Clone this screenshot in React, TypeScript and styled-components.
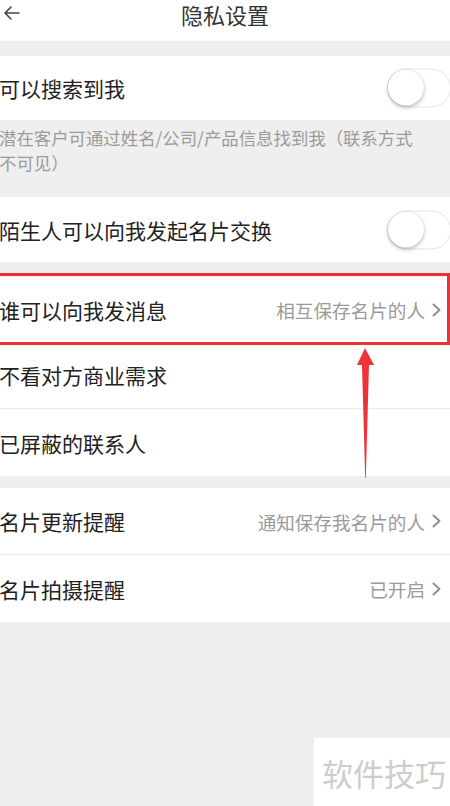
import React from "react";
import styled, { createGlobalStyle } from "styled-components";

const Global = createGlobalStyle`
  html, body { margin: 0; padding: 0; background: #efefef; }
  body { font-family: "Noto Sans CJK SC", "Noto Sans", sans-serif; }
  * { box-sizing: border-box; }
`;

const Page = styled.div`
  position: relative;
  width: 450px;
  height: 806px;
  overflow: hidden;
  background: #efefef;
  display: flex;
  flex-direction: column;
`;

const Header = styled.div`
  height: 41px;
  background: #fff;
  display: flex;
  align-items: flex-start;
  justify-content: center;
  position: relative;
  padding-top: 2px;
`;

const BackButton = styled.div`
  position: absolute;
  left: 3px;
  top: 4px;
  width: 18px;
  height: 18px;
  display: flex;
`;

const Title = styled.div`
  font-size: 22px;
  line-height: 24px;
  color: #333;
`;

const Spacer = styled.div<{ $h: number }>`
  height: ${(p) => p.$h}px;
  flex: none;
`;

const Group = styled.div`
  background: #fff;
  display: flex;
  flex-direction: column;
`;

const Row = styled.div<{ $h: number; $divider?: boolean }>`
  position: relative;
  height: ${(p) => p.$h}px;
  display: flex;
  align-items: center;
  padding: 0 8px 0 0;
  border-bottom: ${(p) => (p.$divider ? "1px solid #ececec" : "none")};
  flex: none;
`;

const Label = styled.div`
  flex: 1;
  font-size: 21px;
  color: #222;
  white-space: nowrap;
  margin-left: -1px;
`;

const Value = styled.div`
  font-size: 18.6px;
  color: #9a9a9a;
  white-space: nowrap;
  margin-right: 6px;
`;

const Note = styled.div`
  height: 77px;
  padding: 5px 30px 0 0;
  font-size: 17.4px;
  line-height: 25px;
  color: #9b9b9b;
  margin-left: -1px;
`;

const Track = styled.div`
  position: absolute;
  left: 387px;
  top: 50%;
  transform: translateY(-50%);
  width: 64px;
  height: 39px;
  border-radius: 20px;
  border: 1.5px solid #e3e3e3;
  background: #fff;
`;

const Knob = styled.div`
  position: absolute;
  left: 0px;
  top: 0px;
  width: 36px;
  height: 36px;
  border-radius: 50%;
  background: #fff;
  box-shadow: 0 2px 4px rgba(0, 0, 0, 0.25), 0 0 1px rgba(0, 0, 0, 0.2);
`;

const Highlight = styled.div`
  position: absolute;
  left: -3px;
  right: 0px;
  top: -4px;
  bottom: -3px;
  border: 3px solid #e8323a;
  border-left: none;
  pointer-events: none;
`;

const ArrowLayer = styled.svg`
  position: absolute;
  left: 355px;
  top: 346px;
  pointer-events: none;
`;

const Watermark = styled.div`
  position: absolute;
  right: 0;
  bottom: 0;
  width: 136px;
  height: 68px;
  background: #fff;
  display: flex;
  align-items: center;
  justify-content: center;
  font-size: 31px;
  color: #cdcdcd;
  padding-left: 4px;
`;

const Chevron = () => (
  <svg width="11" height="14" viewBox="0 0 11 14">
    <path d="M2.5 1.5 L8.5 7 L2.5 12.5" fill="none" stroke="#8f8f8f" strokeWidth="2" strokeLinecap="round" strokeLinejoin="round" />
  </svg>
);

const Toggle = () => (
  <Track>
    <Knob />
  </Track>
);

export default function App() {
  return (
    <Page>
      <Global />
      <Header>
        <BackButton>
          <svg width="18" height="18" viewBox="0 0 18 18">
            <path d="M16 9 H2 M8 3 L2 9 L8 15" fill="none" stroke="#444" strokeWidth="1.6" strokeLinecap="round" strokeLinejoin="round" />
          </svg>
        </BackButton>
        <Title>隐私设置</Title>
      </Header>
      <Spacer $h={15} />
      <Group>
        <Row $h={64}>
          <Label>可以搜索到我</Label>
          <Toggle />
        </Row>
      </Group>
      <Note>潜在客户可通过姓名/公司/产品信息找到我（联系方式不可见）</Note>
      <Group>
        <Row $h={65}>
          <Label>陌生人可以向我发起名片交换</Label>
          <Toggle />
        </Row>
      </Group>
      <Spacer $h={15} />
      <Group>
        <Row $h={65}>
          <Label>谁可以向我发消息</Label>
          <Value>相互保存名片的人</Value>
          <Chevron />
          <Highlight />
        </Row>
        <Row $h={67} $divider>
          <Label>不看对方商业需求</Label>
        </Row>
        <Row $h={67}>
          <Label>已屏蔽的联系人</Label>
        </Row>
      </Group>
      <Spacer $h={12} />
      <Group>
        <Row $h={67} $divider>
          <Label>名片更新提醒</Label>
          <Value>通知保存我名片的人</Value>
          <Chevron />
        </Row>
        <Row $h={67}>
          <Label>名片拍摄提醒</Label>
          <Value>已开启</Value>
          <Chevron />
        </Row>
      </Group>
      <ArrowLayer width="22" height="134" viewBox="0 0 22 134">
        <path d="M10 2 L19 19 L14 19 L10.8 132 L10.2 132 L7 19 L2 19 Z" fill="#ee3237" />
      </ArrowLayer>
      <Watermark>软件技巧</Watermark>
    </Page>
  );
}
